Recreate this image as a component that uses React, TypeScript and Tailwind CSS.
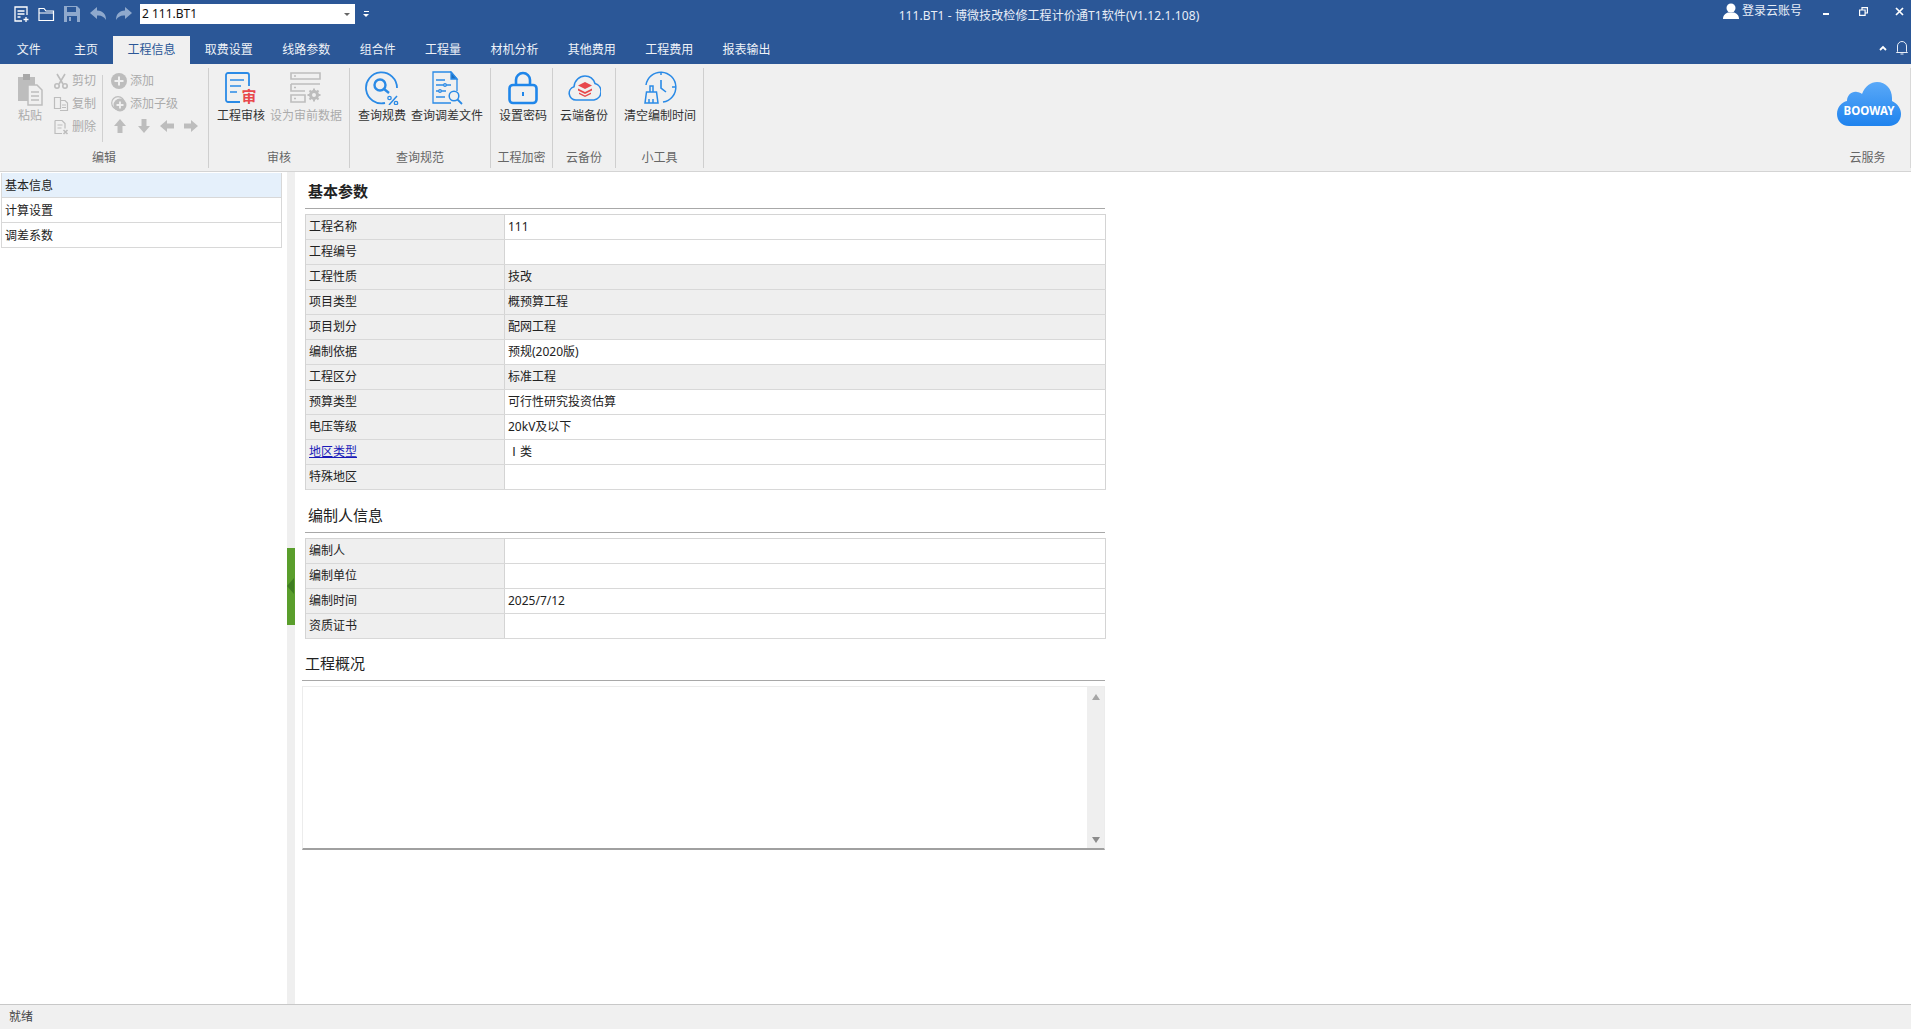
import React from 'react';

const FONT = '"Noto Sans", "Noto Sans CJK SC", sans-serif';

const tabs = ['文件', '主页', '工程信息', '取费设置', '线路参数', '组合件', '工程量', '材机分析', '其他费用', '工程费用', '报表输出'];

const basicRows = [
  { label: '工程名称', value: '111' },
  { label: '工程编号', value: '' },
  { label: '工程性质', value: '技改', gray: true },
  { label: '项目类型', value: '概预算工程', gray: true },
  { label: '项目划分', value: '配网工程', gray: true },
  { label: '编制依据', value: '预规(2020版)' },
  { label: '工程区分', value: '标准工程', gray: true },
  { label: '预算类型', value: '可行性研究投资估算' },
  { label: '电压等级', value: '20kV及以下' },
  { label: '地区类型', value: 'Ⅰ类', link: true },
  { label: '特殊地区', value: '' },
];

const authorRows = [
  { label: '编制人', value: '' },
  { label: '编制单位', value: '' },
  { label: '编制时间', value: '2025/7/12' },
  { label: '资质证书', value: '' },
];

type Row = { label: string; value: string; gray?: boolean; link?: boolean };

const ParamTable = ({ rows }: { rows: Row[] }) => (
  <div className="w-[801px] border-l border-t border-[#d4d4d4]">
    {rows.map((r) => (
      <div key={r.label} className="flex h-[25px] border-b border-[#d8d8d8]">
        <div className={`w-[199px] border-r border-[#d4d4d4] bg-[#efefef] pl-[3px] leading-[24px] ${r.link ? 'text-[#1a1ab8] underline' : 'text-[#222]'}`}>
          {r.label}
        </div>
        <div className={`flex-1 border-r border-[#d4d4d4] pl-[3px] leading-[24px] text-[#222] ${r.gray ? 'bg-[#efefef]' : 'bg-white'}`}>
          {r.value}
        </div>
      </div>
    ))}
  </div>
);

const SectionTitle = ({ children, bold }: { children: React.ReactNode; bold?: boolean }) => (
  <div className={`pl-[3px] text-[15px] leading-[20px] text-[#222] ${bold ? 'font-bold' : ''}`}>{children}</div>
);

const Group = ({ label, className, children }: { label: string; className: string; children: React.ReactNode }) => (
  <div className={`flex h-[100px] flex-col border-r border-[#cfcfcf] ${className}`}>
    <div className="flex flex-1 items-start">{children}</div>
    <div className="h-[18px] text-center leading-[16px] text-[#666]">{label}</div>
  </div>
);

const LargeButton = ({ icon, label, w, disabled }: { icon: React.ReactNode; label: string; w: string; disabled?: boolean }) => (
  <div className={`flex flex-col items-center ${w}`}>
    <div className="flex h-[36px] items-center justify-center">{icon}</div>
    <div className={`mt-[2px] whitespace-nowrap leading-[16px] ${disabled ? 'text-[#ababab]' : 'text-[#333]'}`}>{label}</div>
  </div>
);

const SmallButton = ({ icon, label }: { icon: React.ReactNode; label: string }) => (
  <div className="flex h-[23px] items-center gap-[3px] text-[#ababab]">
    {icon}
    <span className="whitespace-nowrap">{label}</span>
  </div>
);

const BLUE = '#2a8ae6';
const GRAY = '#bdbdbd';

const Cut = () => (
  <svg width="16" height="16" viewBox="0 0 16 16" fill="none" stroke={GRAY} strokeWidth="1.6">
    <path d="M4 1l6 10M12 1L6 11" />
    <circle cx="4" cy="13" r="2.2" />
    <circle cx="12" cy="13" r="2.2" />
  </svg>
);

const Copy = () => (
  <svg width="16" height="16" viewBox="0 0 16 16" fill="none" stroke={GRAY} strokeWidth="1.2">
    <path d="M1.500 1.500h6v11h-6zM7 4.500h5l2.500 2.500v7.500H7" />
    <path d="M9 9h4M9 11.500h4" />
  </svg>
);

const Del = () => (
  <svg width="16" height="16" viewBox="0 0 16 16" fill="none" stroke={GRAY} strokeWidth="1.2">
    <path d="M2 1.500h7l3 3v5M2 1.500v13h7M4.500 6h5M4.500 9h4" />
    <path d="M10.500 11l4 4M14.500 11l-4 4" strokeWidth="1.6" />
  </svg>
);

const Add = () => (
  <svg width="16" height="16" viewBox="0 0 16 16">
    <circle cx="8" cy="8" r="8" fill={GRAY} />
    <path d="M8 3.500v9M3.500 8h9" stroke="#f0f0f0" strokeWidth="2" />
  </svg>
);

const AddChild = () => (
  <svg width="16" height="16" viewBox="0 0 16 16">
    <circle cx="7" cy="7" r="6.300" fill="none" stroke={GRAY} strokeWidth="1.2" />
    <circle cx="9" cy="9" r="6.500" fill={GRAY} />
    <path d="M9 5.500v7M5.500 9h7" stroke="#f0f0f0" strokeWidth="1.800" />
  </svg>
);

const Arrow = ({ dir }: { dir: 'up' | 'down' | 'left' | 'right' }) => {
  const d = {
    up: 'M8 1l6 7h-3.500v7h-5V8H2z',
    down: 'M8 15l6-7h-3.500V1h-5v7H2z',
    left: 'M1 8l7-6v3.500h7v5H8V14z',
    right: 'M15 8L8 2v3.500H1v5h7V14z',
  }[dir];
  return (
    <svg width="16" height="16" viewBox="0 0 16 16">
      <path d={d} fill={GRAY} />
    </svg>
  );
};

const Paste = () => (
  <svg width="26" height="34" viewBox="0 0 26 34">
    <path d="M1 5h17v24H1z" fill={GRAY} />
    <path d="M6 2h7v6H6z" fill="#a8a8a8" />
    <path d="M11 13h9l5 5v15H11z" fill="#f0f0f0" stroke={GRAY} strokeWidth="1.500" />
    <path d="M14 20h8M14 24h8M14 28h8" stroke={GRAY} strokeWidth="1.300" />
  </svg>
);

const Audit = () => (
  <svg width="32" height="32" viewBox="0 0 32 32">
    <path d="M15 30H3a2 2 0 0 1-2-2V3a2 2 0 0 1 2-2h19a2 2 0 0 1 2 2v11" fill="none" stroke={BLUE} strokeWidth="1.800" />
    <path d="M5 8h14M5 14h11M5 20h7" stroke={BLUE} strokeWidth="1.600" />
    <text x="16.500" y="29.500" fontSize="15" fontWeight="700" fill="#e8484c" fontFamily={FONT}>审</text>
  </svg>
);

const PreAudit = () => (
  <svg width="32" height="32" viewBox="0 0 32 32" fill="none" stroke={GRAY} strokeWidth="1.600">
    <path d="M1 1h29v6H1zM1 12h29M1 12v7h14M1 23h14v7H1z" />
    <path d="M4 4h2M4 15.500h2M4 26.500h2" />
    <circle cx="24" cy="23" r="3.500" strokeWidth="3" />
    <path d="M24 16.500v3M24 26.500v3M17.500 23h3M27.500 23h3M19.500 18.500l2 2M26.500 25.500l2 2M19.500 27.500l2-2M26.500 20.500l2-2" strokeWidth="2" />
  </svg>
);

const RateQuery = () => (
  <svg width="34" height="34" viewBox="0 0 34 34" fill="none" stroke={BLUE}>
    <path d="M20 32A15.500 15.500 0 1 1 32 17" strokeWidth="1.800" />
    <circle cx="15" cy="14" r="5.500" strokeWidth="2.400" />
    <path d="M19 18l5 4" strokeWidth="2.400" />
    <circle cx="24.500" cy="27" r="1.700" strokeWidth="1.300" />
    <circle cx="31" cy="32" r="1.700" strokeWidth="1.300" />
    <path d="M32 25l-8 9" strokeWidth="1.500" />
  </svg>
);

const FileQuery = () => (
  <svg width="32" height="34" viewBox="0 0 32 34" fill="none" stroke={BLUE} strokeWidth="1.300">
    <path d="M20 1H2v31h18" />
    <path d="M20 1l6 7v12" />
    <path d="M20 1l6 7h-6z" fill="#1c6fc0" />
    <path d="M5 9h9M5 14h15M5 20h10M5 26h9" />
    <circle cx="14" cy="14" r="1.300" fill="#f0f0f0" />
    <circle cx="9" cy="20" r="1.300" fill="#f0f0f0" />
    <circle cx="23" cy="25" r="4.800" strokeWidth="1.500" />
    <path d="M26.500 28.500l4.500 4.500" strokeWidth="1.800" />
  </svg>
);

const Lock = () => (
  <svg width="30" height="34" viewBox="0 0 30 34" fill="none" stroke="#1f86ea" strokeWidth="2.600">
    <path d="M8 14V9a7 7 0 0 1 14 0v5" />
    <rect x="1.500" y="14" width="27" height="18" rx="3.500" />
    <path d="M15 21v4" strokeWidth="2" />
  </svg>
);

const CloudBackup = () => (
  <svg width="33" height="26" viewBox="0 0 33 26">
    <path d="M8 25a6.800 6.800 0 0 1-2-13.300C6.500 5.500 11.500 1 17 1c5 0 8.500 3 10 7.500a8.500 8.500 0 0 1-1 16.500z" fill="none" stroke={BLUE} strokeWidth="1.600" />
    <path d="M17 7l7 3.500-7 3.500-7-3.500z" fill="#e8484c" />
    <path d="M10 13.500l7 3.500 7-3.500v2l-7 3.500-7-3.500z" fill="#e8484c" />
    <path d="M11 17.500l6 3 6-3v1.500l-6 3-6-3z" fill="#e8484c" />
  </svg>
);

const ClearTime = () => (
  <svg width="34" height="34" viewBox="0 0 34 34" fill="none" stroke={BLUE} strokeWidth="1.500">
    <path d="M3 14A15 15 0 1 1 20 31" />
    <path d="M18 1v3M32 16h-3" />
    <path d="M18 9v8l5 4" strokeWidth="1.600" />
    <path d="M7 15h3v6H7zM3.500 21h10l1.500 11H2z" />
    <path d="M6 32v-4M10 32v-4" />
  </svg>
);

const Logo = () => (
  <svg width="66" height="46" viewBox="0 0 66 46">
    <defs>
      <linearGradient id="bw" x1="0" y1="0" x2="0" y2="1">
        <stop offset="0" stopColor="#5aa9f8" />
        <stop offset="1" stopColor="#1f83ee" />
      </linearGradient>
    </defs>
    <path d="M13 45C5 45 1 39 1 33c0-7 5-12 10-13 0-6 5-10 10-9 2 0 4 1 5 2C29 5 35 1 41 1c9 0 15 7 15 16v3c6 3 9 8 9 13 0 7-5 12-12 12z" fill="url(#bw)" />
    <text x="33" y="34" textAnchor="middle" fontSize="11.500" fontWeight="700" fill="#fff" fontFamily={FONT}>BOOWAY</text>
  </svg>
);

export default function App() {
  return (
    <div className="flex h-[1029px] w-[1911px] flex-col overflow-hidden bg-white text-[12px]" style={{ fontFamily: FONT }}>
      {/* title bar + tabs */}
      <div className="h-[64px] bg-[#2b5797] text-white">
        <div className="flex h-[36px]">
          <div className="flex h-[28px] w-[898px] items-center pl-[13px]">
            <svg width="17" height="17" viewBox="0 0 17 17" fill="none" stroke="#fff" strokeWidth="1.300">
              <path d="M9 15H2V1h12v8M4.500 5h7M4.500 8h7M4.500 11h3M13 11v5M10.500 13.500h5" />
            </svg>
            <svg className="ml-[8px]" width="17" height="15" viewBox="0 0 17 15" fill="none" stroke="#fff" strokeWidth="1.200">
              <path d="M1 13.500V1.500h5l2 2.500h7.500v9.500zM1 6h14.500" />
            </svg>
            <svg className="ml-[9px]" width="16" height="16" viewBox="0 0 16 16">
              <path d="M0 0h13l3 3v13H0z" fill="#8fa9cd" />
              <path d="M3 1h9v5H3zM3 10h10v6H3z" fill="#2b5797" />
              <path d="M5 11h2v4H5z" fill="#8fa9cd" />
            </svg>
            <svg className="ml-[10px]" width="16" height="14" viewBox="0 0 16 14">
              <path d="M7 0L0 6l7 6V8.500c4-.500 7 1 9 4.500 0-6-3-9-9-9.500z" fill="#8fa9cd" />
            </svg>
            <svg className="ml-[10px]" width="16" height="14" viewBox="0 0 16 14">
              <path d="M9 0l7 6-7 6V8.500c-4-.500-7 1-9 4.500 0-6 3-9 9-9.500z" fill="#8fa9cd" />
            </svg>
            <div className="ml-[8px] flex h-[20px] w-[215px] items-center justify-between bg-white pl-[2px] pr-[5px] text-[#111]">
              <span>2 111.BT1</span>
              <span className="h-0 w-0 border-x-[3px] border-t-[3px] border-x-transparent border-t-[#666]" />
            </div>
            <div className="ml-[8px] flex flex-col items-center gap-[2px]">
              <span className="h-px w-[5px] bg-white" />
              <span className="h-0 w-0 border-x-[3px] border-t-[3px] border-x-transparent border-t-white" />
            </div>
          </div>
          <div className="flex h-[32px] w-[302px] items-center justify-center whitespace-nowrap tracking-[0.1px] text-[#e8eef7]">
            111.BT1 - 博微技改检修工程计价通T1软件(V1.12.1.108)
          </div>
          <div className="flex h-[22px] flex-1 items-center pl-[523px] text-[#e8eef7]">
            <svg width="16" height="16" viewBox="0 0 16 16" fill="#fff">
              <circle cx="8" cy="5" r="4.500" />
              <path d="M0 16c0-4 3-6 5-6.500h6c2 .500 5 2.500 5 6.500z" />
            </svg>
            <span className="ml-[3px] whitespace-nowrap">登录云账号</span>
            <span className="ml-[21px] mt-[5px] h-[2px] w-[6px] bg-white" />
            <svg className="ml-[30px]" width="9" height="9" viewBox="0 0 9 9" fill="none" stroke="#fff" strokeWidth="1.200">
              <path d="M0.600 3h5.500v5.400H0.600zM3 3V0.600h5.400V6H6.100" />
            </svg>
            <svg className="ml-[27px]" width="9" height="9" viewBox="0 0 9 9" fill="none" stroke="#fff" strokeWidth="1.700">
              <path d="M1 1l7 7M8 1L1 8" />
            </svg>
          </div>
        </div>
        <div className="flex h-[28px] items-end pl-[2px]">
          {tabs.map((t) => (
            <div
              key={t}
              className={`h-[28px] whitespace-nowrap px-[14.700px] leading-[28px] ${t === '工程信息' ? 'bg-[#f0f0f0] text-[#2b5797]' : 'text-[#eef2f8]'} ${t === '主页' ? 'ml-[4px]' : ''}`}
            >
              {t}
            </div>
          ))}
          <div className="ml-auto flex items-center gap-[9px] self-start pr-[3px] pt-[4px]">
            <svg width="8" height="6" viewBox="0 0 8 6" fill="none" stroke="#fff" strokeWidth="1.800">
              <path d="M1 5l3-3 3 3" />
            </svg>
            <svg width="12" height="15" viewBox="0 0 12 15" fill="none" stroke="#e8eef7" strokeWidth="1">
              <path d="M1.500 11.500V6a4.500 4.500 0 0 1 9 0v5.500l1 1H.500zM4.500 14h3" />
            </svg>
          </div>
        </div>
      </div>

      {/* ribbon */}
      <div className="flex h-[108px] border-b border-[#d4d4d4] bg-[#f0f0f0] pt-[4px]">
        <Group label="编辑" className="w-[209px]">
          <div className="ml-[15px] mt-[4px] flex w-[30px] flex-col items-center">
            <Paste />
            <div className="mt-[2px] leading-[16px] text-[#ababab]">粘贴</div>
          </div>
          <div className="ml-[8px] mt-[1px] flex flex-col">
            <SmallButton icon={<Cut />} label="剪切" />
            <SmallButton icon={<Copy />} label="复制" />
            <SmallButton icon={<Del />} label="删除" />
          </div>
          <div className="ml-[6px] mt-[7px] h-[67px] w-px bg-[#d0d0d0]" />
          <div className="ml-[8px] mt-[1px] flex flex-col">
            <SmallButton icon={<Add />} label="添加" />
            <SmallButton icon={<AddChild />} label="添加子级" />
            <div className="flex h-[21px] items-center gap-[7.500px] pl-[1px]">
              <Arrow dir="up" />
              <Arrow dir="down" />
              <Arrow dir="left" />
              <Arrow dir="right" />
            </div>
          </div>
        </Group>
        <Group label="审核" className="w-[141px]">
          <div className="flex gap-[5px] pl-[8px] pt-[2px]">
            <LargeButton icon={<Audit />} label="工程审核" w="w-[48px]" />
            <LargeButton icon={<PreAudit />} label="设为审前数据" w="w-[72px]" disabled />
          </div>
        </Group>
        <Group label="查询规范" className="w-[141px]">
          <div className="flex gap-[5px] pl-[8px] pt-[2px]">
            <LargeButton icon={<RateQuery />} label="查询规费" w="w-[48px]" />
            <LargeButton icon={<FileQuery />} label="查询调差文件" w="w-[72px]" />
          </div>
        </Group>
        <Group label="工程加密" className="w-[62px]">
          <div className="pl-[8px] pt-[2px]">
            <LargeButton icon={<Lock />} label="设置密码" w="w-[48px]" />
          </div>
        </Group>
        <Group label="云备份" className="w-[63px]">
          <div className="pl-[7px] pt-[2px]">
            <LargeButton icon={<CloudBackup />} label="云端备份" w="w-[48px]" />
          </div>
        </Group>
        <Group label="小工具" className="w-[88px]">
          <div className="pl-[8px] pt-[2px]">
            <LargeButton icon={<ClearTime />} label="清空编制时间" w="w-[72px]" />
          </div>
        </Group>
        <div className="flex-1" />
        <div className="flex h-[100px] w-[86px] flex-col items-center border-r border-[#d8d8d8]">
          <div className="mt-[13px] flex-1 pl-[3px]">
            <Logo />
          </div>
          <div className="h-[18px] leading-[16px] text-[#666]">云服务</div>
        </div>
      </div>

      {/* main */}
      <div className="flex min-h-0 flex-1">
        <div className="w-[287px] pl-[1px] pr-[5px] pt-[1px]">
          {['基本信息', '计算设置', '调差系数'].map((item, i) => (
            <div
              key={item}
              className={`h-[25px] border-x border-b border-[#d8d8d8] pl-[3px] leading-[25px] text-[#222] ${i === 0 ? 'bg-[#e5f0fb]' : 'bg-white'}`}
            >
              {item}
            </div>
          ))}
        </div>
        <div className="flex w-[8px] items-center bg-[#efefef] pb-[4px]">
          <div className="flex h-[77px] w-[8px] items-center bg-[#5a9e2c]">
            <span className="h-0 w-0 border-y-[8px] border-r-[7px] border-y-transparent border-r-[#3f7d22]" />
          </div>
        </div>
        <div className="w-[810px] pl-[10px] pt-[9px]">
          <div className="h-[27px]">
            <SectionTitle bold>基本参数</SectionTitle>
          </div>
          <div className="mb-[5px] h-px w-[800px] bg-[#a8a8a8]" />
          <ParamTable rows={basicRows} />
          <div className="mt-[15px] h-[27px]">
            <SectionTitle>编制人信息</SectionTitle>
          </div>
          <div className="mb-[5px] h-px w-[800px] bg-[#a8a8a8]" />
          <ParamTable rows={authorRows} />
          <div className="-ml-[3px] mt-[14px] h-[27px]">
            <SectionTitle>工程概况</SectionTitle>
          </div>
          <div className="mb-[5px] h-px w-[803px] -translate-x-[3px] bg-[#a8a8a8]" />
          <div className="flex h-[164px] w-[803px] -translate-x-[3px] justify-end border border-b-2 border-[#ececec] border-b-[#a0a0a0] bg-white">
            <div className="flex w-[17px] flex-col items-center justify-between bg-[#efefef] pb-[5px] pt-[7px]">
              <span className="h-0 w-0 border-x-[4px] border-b-[6px] border-x-transparent border-b-[#a6a6a6]" />
              <span className="h-0 w-0 border-x-[4px] border-t-[6px] border-x-transparent border-t-[#8c8c8c]" />
            </div>
          </div>
        </div>
      </div>

      {/* status bar */}
      <div className="h-[25px] border-t border-[#c8c8c8] bg-[#f0f0f0] pl-[9px] leading-[23px] text-[#444]">就绪</div>
    </div>
  );
}
